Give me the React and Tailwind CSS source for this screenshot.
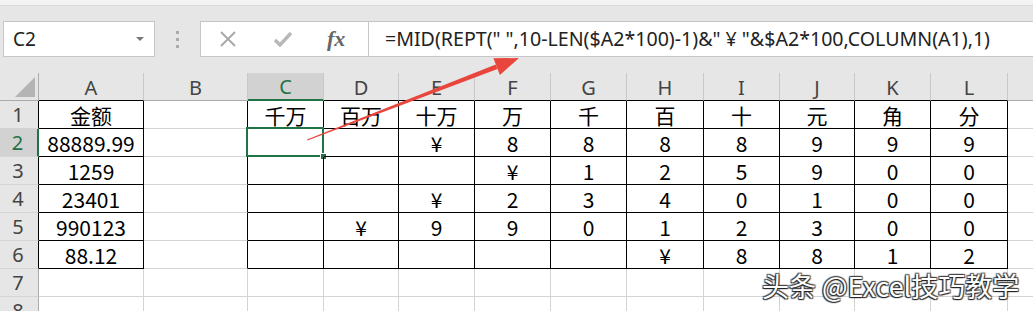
import React from 'react';

const cols = [
  { key: 'A', w: 'w-[105px]' },
  { key: 'B', w: 'w-[104px]' },
  { key: 'C', w: 'w-[76px]' },
  { key: 'D', w: 'w-[75px]' },
  { key: 'E', w: 'w-[76px]' },
  { key: 'F', w: 'w-[76px]' },
  { key: 'G', w: 'w-[76px]' },
  { key: 'H', w: 'w-[77px]' },
  { key: 'I', w: 'w-[76px]' },
  { key: 'J', w: 'w-[75px]' },
  { key: 'K', w: 'w-[76px]' },
  { key: 'L', w: 'w-[77px]' },
  { key: 'M', w: 'w-[76px]' },
];

const data = [
  ['金额', '', '千万', '百万', '十万', '万', '千', '百', '十', '元', '角', '分'],
  ['88889.99', '', '', '', '¥', '8', '8', '8', '8', '9', '9', '9'],
  ['1259', '', '', '', '', '¥', '1', '2', '5', '9', '0', '0'],
  ['23401', '', '', '', '¥', '2', '3', '4', '0', '1', '0', '0'],
  ['990123', '', '', '¥', '9', '9', '0', '1', '2', '3', '0', '0'],
  ['88.12', '', '', '', '', '', '', '¥', '8', '8', '1', '2'],
  [],
  [],
];

// columns that carry the black table borders (A and C..L)
const inTable = (r, c) => r >= 1 && r <= 6 && (c === 0 || (c >= 2 && c <= 11));

function RowHeader({ r }) {
  const selected = r === 2;
  let cls = 'w-[39px] shrink-0 h-[28px] flex items-center justify-center pr-[2px] border-b border-b-[#d4d4d4] text-[20px] leading-none font-[\'Noto_Sans\',sans-serif] ';
  if (selected) cls += 'bg-[#d2d2d2] text-[#217346] border-r-2 border-r-[#217346]';
  else if (r >= 1 && r <= 6) cls += 'bg-[#e6e6e6] text-[#444] border-r border-r-black';
  else cls += 'bg-[#e6e6e6] text-[#444] border-r border-r-[#ababab]';
  return <div className={cls}>{r}</div>;
}

function Cell({ r, c, w, value }) {
  const right = inTable(r, c) || inTable(r, c + 1) ? 'border-r-black' : 'border-r-[#d4d4d4]';
  const bottom = inTable(r, c) || inTable(r + 1, c) ? 'border-b-black' : 'border-b-[#d4d4d4]';
  const selected = r === 2 && c === 2;
  return (
    <div className={`${w} shrink-0 h-[28px] relative flex items-end justify-center pb-[2px] border-r border-b ${right} ${bottom} text-[21px] leading-none text-black`}>
      {value}
      {selected && (
        <>
          <div className="absolute -left-[2px] -top-[2px] -right-[1px] -bottom-[1px] border-2 border-[#217346]" />
          <div className="absolute -right-[4px] -bottom-[4px] w-[7px] h-[7px] bg-[#217346] border border-white" />
        </>
      )}
    </div>
  );
}

export default function App() {
  return (
    <div className="w-[1033px] h-[311px] overflow-hidden relative bg-white font-['Noto_Sans_CJK_SC','Noto_Sans',sans-serif]">
      <div className="h-[6px] bg-[#f3f3f3] border-b border-[#d9d9d9]" />

      <div className="h-[67px] bg-[#e6e6e6] pt-[15px] flex items-start">
        <div className="ml-[3px] w-[152px] h-[36px] bg-white border border-[#c6c6c6] flex items-center justify-between pl-[9px] pr-[10px]">
          <span className="text-[19px] text-[#222] font-['Noto_Sans',sans-serif]">C2</span>
          <span className="w-0 h-0 border-l-[4px] border-r-[4px] border-t-[4px] border-l-transparent border-r-transparent border-t-[#777]" />
        </div>
        <div className="w-[45px] h-[36px] flex flex-col items-center justify-center gap-[4px]">
          <span className="w-[3px] h-[3px] bg-[#aaa]" />
          <span className="w-[3px] h-[3px] bg-[#aaa]" />
          <span className="w-[3px] h-[3px] bg-[#aaa]" />
        </div>
        <div className="w-[169px] h-[36px] bg-white border border-[#c6c6c6] flex items-center pl-[18px]">
          <svg width="18" height="16" viewBox="0 0 18 16" className="mr-[37px]">
            <path d="M2 1 L16 15 M16 1 L2 15" stroke="#a6a6a6" strokeWidth="1.8" fill="none" />
          </svg>
          <svg width="18" height="16" viewBox="0 0 18 16" className="mr-[35px]">
            <path d="M1 9 L6 14 L17 2" stroke="#b8b8b8" strokeWidth="3.4" fill="none" />
          </svg>
          <span className="text-[22px] italic font-bold text-[#666] font-['Liberation_Serif',serif] leading-none">fx</span>
        </div>
        <div className="flex-1 -ml-[1px] -mr-[4px] h-[36px] bg-white border border-[#c6c6c6] flex items-center pl-[16px]">
          <span className="text-[19.6px] text-[#222] whitespace-pre font-['Noto_Sans',sans-serif]">
            {'=MID(REPT(" ",10-LEN($A2*100)-1)&" ¥ "&$A2*100,COLUMN(A1),1)'}
          </span>
        </div>
      </div>

      <div className="flex">
        <div className="w-[39px] shrink-0 h-[28px] bg-[#e6e6e6] border-r border-b border-[#ababab] relative">
          <svg width="22" height="22" viewBox="0 0 22 22" className="absolute right-[2px] bottom-[2px]">
            <path d="M21 1 L21 21 L1 21 Z" fill="#b4b4b4" />
          </svg>
        </div>
        {cols.map((col, c) => {
          const selected = col.key === 'C';
          const bottom = inTable(1, c) ? 'border-b-black' : 'border-b-[#ababab]';
          return (
            <div
              key={col.key}
              className={`${col.w} shrink-0 h-[28px] flex items-end justify-center pb-[2px] border-r border-r-[#c8c8c8] text-[20px] leading-none font-['Noto_Sans',sans-serif] ${
                selected ? 'bg-[#d2d2d2] text-[#217346] border-b-2 border-b-[#217346]' : `bg-[#e6e6e6] text-[#444] border-b ${bottom}`
              }`}
            >
              {col.key === 'M' ? '' : col.key}
            </div>
          );
        })}
      </div>

      {data.map((row, i) => {
        const r = i + 1;
        return (
          <div key={r} className="flex">
            <RowHeader r={r} />
            {cols.map((col, c) => (
              <Cell key={col.key} r={r} c={c} w={col.w} value={row[c] || ''} />
            ))}
          </div>
        );
      })}

      <svg width="1033" height="311" className="absolute inset-0 pointer-events-none">
        <polygon points="307,139.4 495.7,64.4 497.5,69 307.4,140.6" fill="#e8453c" />
        <polygon points="519,58 493.4,58.3 499.9,75.1" fill="#e8453c" />
      </svg>

      <div className="absolute left-[762px] top-[272px] text-[27px] leading-none text-white whitespace-nowrap [text-shadow:-1px_1px_1px_#222,1px_-1px_1px_#444,-1px_-1px_1px_#444,1px_1px_1px_#333]">
        头条 @Excel技巧教学
      </div>
    </div>
  );
}
